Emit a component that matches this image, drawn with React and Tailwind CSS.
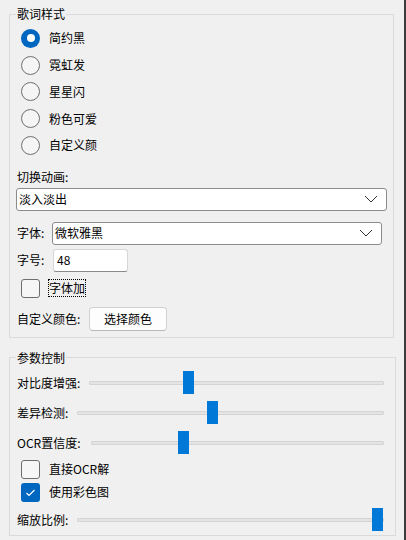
import React from 'react';

const font = "font-['Noto_Sans_CJK_SC','Noto_Sans_CJK_SC',sans-serif] text-[12px] leading-[16px] text-black";

function Radio({ label, checked }) {
  return (
    <div className="flex h-[26.75px] items-center">
      {checked ? (
        <span className="ml-[5px] flex h-[19px] w-[19px] items-center justify-center rounded-full bg-[#0067c0]">
          <span className="h-[8px] w-[8px] rounded-full bg-white" />
        </span>
      ) : (
        <span className="ml-[5px] h-[19px] w-[19px] rounded-full border border-[#6e6e6e] bg-[#f5f5f5]" />
      )}
      <span className="ml-[9px]">{label}</span>
    </div>
  );
}

function Checkbox({ label, checked, focused }) {
  return (
    <div className="flex h-[23px] items-center">
      {checked ? (
        <span className="ml-[5px] flex h-[19px] w-[19px] items-center justify-center rounded-[3px] bg-[#0067c0]">
          <svg width="19" height="19" viewBox="0 0 19 19">
            <path d="M5.5 10 L8 12.5 L13.5 7" fill="none" stroke="white" strokeWidth="1.2" />
          </svg>
        </span>
      ) : (
        <span className="ml-[5px] h-[19px] w-[19px] rounded-[3px] border border-[#6e6e6e] bg-[#f6f6f6]" />
      )}
      <span
        className={
          focused
            ? 'ml-[8px] border border-dotted border-black px-[0px]'
            : 'ml-[9px]'
        }
      >
        {label}
      </span>
    </div>
  );
}

function Chevron() {
  return (
    <svg width="14" height="8" viewBox="0 0 14 8" className="shrink-0">
      <path d="M1 1 L7 7 L13 1" fill="none" stroke="#333" strokeWidth="1" />
    </svg>
  );
}

function Select({ value, width }) {
  return (
    <div
      className="flex h-[23px] items-center justify-between rounded-[3px] border border-[#8c8c8c] bg-white pl-[2px] pr-[8px]"
      style={{ width }}
    >
      <span>{value}</span>
      <Chevron />
    </div>
  );
}

function Slider({ label, labelWidth, value }) {
  return (
    <div className="flex h-[30px] items-center">
      <span className="ml-[1px] shrink-0" style={{ width: labelWidth }}>
        {label}
      </span>
      <div className="relative flex h-[23px] w-[293px] flex-1 items-center mr-[11px]">
        <div className="h-[4px] w-full rounded-[1px] border border-[#d4d4d4] bg-[#e4e4e4]" />
        <div
          className="absolute top-0 h-[23px] w-[11px] bg-[#0078d7]"
          style={{ left: `calc(${value * 100}% - ${value * 11}px)` }}
        />
      </div>
    </div>
  );
}

export default function App() {
  return (
    <div className={`flex h-[540px] w-[406px] overflow-hidden bg-[#f0f0f0] ${font}`}>
      <div className="w-[404px]">
        <fieldset className="ml-[9px] mt-[6px] w-[385px] border border-[#dadada] pb-[6px] pl-[6px]">
          <legend className="px-[1px]">歌词样式</legend>
          <div className="pt-[3px]">
            <Radio label="简约黑" checked />
            <Radio label="霓虹发" />
            <Radio label="星星闪" />
            <Radio label="粉色可爱" />
            <Radio label="自定义颜" />
          </div>
          <div className="ml-[1px] mt-[10px]">切换动画:</div>
          <div className="mt-[3px]">
            <Select value="淡入淡出" width="371px" />
          </div>
          <div className="mt-[11px] flex h-[23px] items-center">
            <span className="ml-[1px] w-[35px]">字体:</span>
            <Select value="微软雅黑" width="330px" />
          </div>
          <div className="mt-[4px] flex h-[23px] items-center">
            <span className="ml-[1px] w-[36px]">字号:</span>
            <div className="flex h-[23px] w-[75px] items-center rounded-[3px] border border-[#d6d6d6] border-b-[#8a8a8a] bg-white pl-[3px]">
              48
            </div>
          </div>
          <div className="mt-[5px]">
            <Checkbox label="字体加" focused />
          </div>
          <div className="mt-[7px] flex h-[24px] items-center">
            <span className="ml-[1px] w-[72px]">自定义颜色:</span>
            <button
              type="button"
              className="h-[24px] w-[78px] rounded-[4px] border border-[#d0d0d0] border-b-[#b8b8b8] bg-[#fdfdfd]"
            >
              选择颜色
            </button>
          </div>
        </fieldset>

        <fieldset className="ml-[9px] mt-[12px] w-[385px] border border-[#dadada] pl-[6px]">
          <legend className="px-[1px]">参数控制</legend>
          <div className="pt-[2px]">
            <Slider label="对比度增强:" labelWidth="72px" value={0.331} />
            <Slider label="差异检测:" labelWidth="60px" value={0.44} />
            <Slider label="OCR置信度:" labelWidth="74px" value={0.308} />
          </div>
          <Checkbox label="直接OCR解" />
          <Checkbox label="使用彩色图" checked />
          <div className="mt-[1px]">
            <Slider label="缩放比例:" labelWidth="60px" value={0.997} />
          </div>
        </fieldset>
      </div>
      <div className="h-full w-[2px] bg-[#3b3b3b]" />
    </div>
  );
}
